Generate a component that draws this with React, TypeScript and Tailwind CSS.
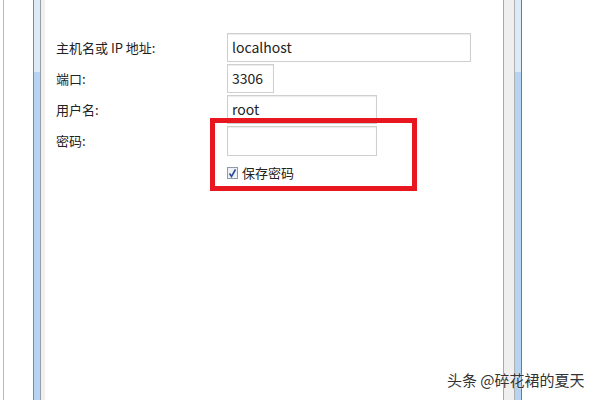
import React from "react";

const font = { fontFamily: '"Microsoft YaHei", "Noto Sans CJK SC", sans-serif' };

// one label + input row of the connection form
function Row({ label, value, width, height = "h-[29px]" }: { label: string; value?: string; width: string; height?: string }) {
  return (
    <div className="flex items-center">
      <div className="w-[171px] text-[13px] text-[#222]">{label}</div>
      <div
        className={`${width} ${height} border border-[#cfcfcf] bg-white shadow-[inset_0_1px_1px_rgba(0,0,0,0.08)] px-[4px] flex items-center text-[14px] text-[#222]`}
      >
        {value}
      </div>
    </div>
  );
}

export default function App() {
  return (
    <div className="relative w-[600px] h-[400px] bg-white flex overflow-hidden" style={font}>
      {/* left pane edge */}
      <div className="w-[33px] h-full flex">
        <div className="w-[3px]" />
        <div className="w-[1px] h-full bg-[#b8b8b8]" />
      </div>

      {/* splitter */}
      <div className="w-[1px] h-full bg-[#7f8a96]" />
      <div className="w-[6px] h-full flex flex-col">
        <div className="h-[72px] bg-[#dce9f6]" />
        <div className="flex-1 bg-[#b6d4f1]" />
      </div>
      <div className="w-[1px] h-full bg-[#9aa0a8]" />
      <div className="w-[4px] h-full bg-[#f4efef]" />

      {/* form */}
      <div className="w-[458px] h-full pl-[11px] pt-[33px] flex flex-col gap-[2px]">
        <Row label="主机名或 IP 地址:" value="localhost" width="w-[244px]" />
        <Row label="端口:" value="3306" width="w-[47px]" />
        <Row label="用户名:" value="root" width="w-[150px]" />
        <Row label="密码:" width="w-[150px]" height="h-[30px]" />
        <div className="flex items-center pl-[171px] mt-[5px]">
          <div className="w-[11px] h-[12px] border border-[#8e9aa8] bg-[#eef2f7] flex items-center justify-center">
            <svg width="9" height="10" viewBox="0 0 9 10">
              <path d="M1.5 5.5 L3.5 8.5 L7.5 1.5" fill="none" stroke="#2d4a9a" strokeWidth="1.6" />
            </svg>
          </div>
          <span className="ml-[4px] text-[13px] text-[#222]">保存密码</span>
        </div>
      </div>

      {/* right splitter */}
      <div className="w-[1px] h-full bg-[#a8a8a8]" />
      <div className="w-[10px] h-full bg-[#efefef]" />
      <div className="w-[1px] h-full bg-[#b0b0b0]" />
      <div className="w-[6px] h-full flex flex-col">
        <div className="h-[72px] bg-[#dce9f6]" />
        <div className="flex-1 bg-[#b6d4f1]" />
      </div>
      <div className="w-[1px] h-full bg-[#6f7a86]" />
      <div className="flex-1 h-full bg-white" />

      {/* red highlight annotation */}
      <div className="absolute left-[210px] top-[118px] w-[207px] h-[73px] border-[5px] border-[#e8161f]" />

      {/* watermark */}
      <div className="absolute left-[447px] top-[369px] text-[15px] text-[#333] [text-shadow:0_0_2px_#fff]">
        头条 @碎花裙的夏天
      </div>
    </div>
  );
}
